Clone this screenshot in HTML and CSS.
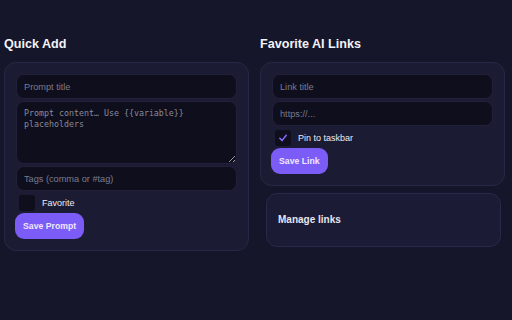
FILE: index.html
```html
<!DOCTYPE html>
<html lang="en">
<head>
    <meta charset="UTF-8">
    <meta name="viewport" content="width=device-width, initial-scale=1.0">
    <title>Quick Add</title>
    <link rel="stylesheet" href="styles.css">
</head>
<body>
    <main class="columns">
        <!-- Quick Add -->
        <section class="column">
            <h2>Quick Add</h2>
            <div class="card">
                <form class="form">
                    <input type="text" placeholder="Prompt title">
                    <textarea placeholder="Prompt content… Use {{variable}} placeholders"></textarea>
                    <input type="text" placeholder="Tags (comma or #tag)">
                    <label class="check">
                        <input type="checkbox">
                        <span class="box"></span>
                        <span>Favorite</span>
                    </label>
                    <button type="button" class="btn">Save Prompt</button>
                </form>
            </div>
        </section>

        <!-- Favorite AI Links -->
        <section class="column">
            <h2>Favorite AI Links</h2>
            <div class="card">
                <form class="form">
                    <input type="text" placeholder="Link title">
                    <input type="text" placeholder="https://...">
                    <label class="check">
                        <input type="checkbox" checked>
                        <span class="box">
                            <svg viewBox="0 0 16 16" width="16" height="16"><path d="M4.8 8.3 L7 10.6 L11.2 5.2" fill="none" stroke="#8b6cf8" stroke-width="1.5" stroke-linecap="round" stroke-linejoin="round"/></svg>
                        </span>
                        <span>Pin to taskbar</span>
                    </label>
                    <button type="button" class="btn">Save Link</button>
                </form>
            </div>
            <div class="manage">Manage links</div>
        </section>
    </main>
</body>
</html>
```

FILE: styles.css
```css
* {
    margin: 0;
    padding: 0;
    box-sizing: border-box;
}

body {
    font-family: 'Liberation Sans', Arial, sans-serif;
    background-color: #15162a;
    color: #f0f0f6;
    height: 100vh;
}

.columns {
    display: grid;
    grid-template-columns: 1fr 1fr;
    gap: 11px;
    padding: 36px 7px 0 4px;
    align-items: start;
}

.column h2 {
    font-size: 12.6px;
    line-height: 16px;
    font-weight: bold;
    margin-bottom: 10px;
    color: #f2f2f8;
}

.card {
    background-color: #1b1b33;
    border: 1px solid #282846;
    border-radius: 12px;
    padding: 11px;
}

.form {
    display: flex;
    flex-direction: column;
    gap: 2px;
}

.form input[type="text"],
.form textarea {
    background-color: #0e0e1d;
    border: 1px solid #20203a;
    border-radius: 8px;
    color: #e0e0ea;
    outline: none;
}

.form input[type="text"] {
    height: 25px;
    padding: 0 7px;
    font-family: 'Liberation Sans', Arial, sans-serif;
    font-size: 9.2px;
}

.form textarea {
    height: 63px;
    padding: 6px 7px;
    font-family: 'DejaVu Sans Mono', monospace;
    font-size: 8.3px;
    line-height: 10.5px;
    resize: vertical;
}

.form ::placeholder {
    color: #7b7b8d;
}

.form textarea::placeholder {
    color: #8a8a98;
}

.check {
    display: flex;
    align-items: center;
    gap: 7px;
    margin: 2px 0 0 3px;
    font-size: 9px;
    color: #ececf4;
    cursor: pointer;
}

.check input {
    display: none;
}

.check .box {
    width: 16px;
    height: 16px;
    border-radius: 3px;
    background-color: #0e0e1d;
    display: flex;
}

.btn {
    align-self: flex-start;
    height: 26px;
    padding: 0 8px;
    margin-left: -1px;
    border: none;
    border-radius: 9px;
    background-color: #7b5cf6;
    color: #eee8ff;
    font-family: 'Liberation Sans', Arial, sans-serif;
    font-size: 8.7px;
    font-weight: bold;
    cursor: pointer;
}

.manage {
    margin: 7px 4px 0 6px;
    background-color: #1b1b36;
    border: 1px solid #28284a;
    border-radius: 11px;
    padding: 20px 11px;
    font-size: 10px;
    line-height: 12px;
    font-weight: bold;
    color: #e6e6f0;
}
```
